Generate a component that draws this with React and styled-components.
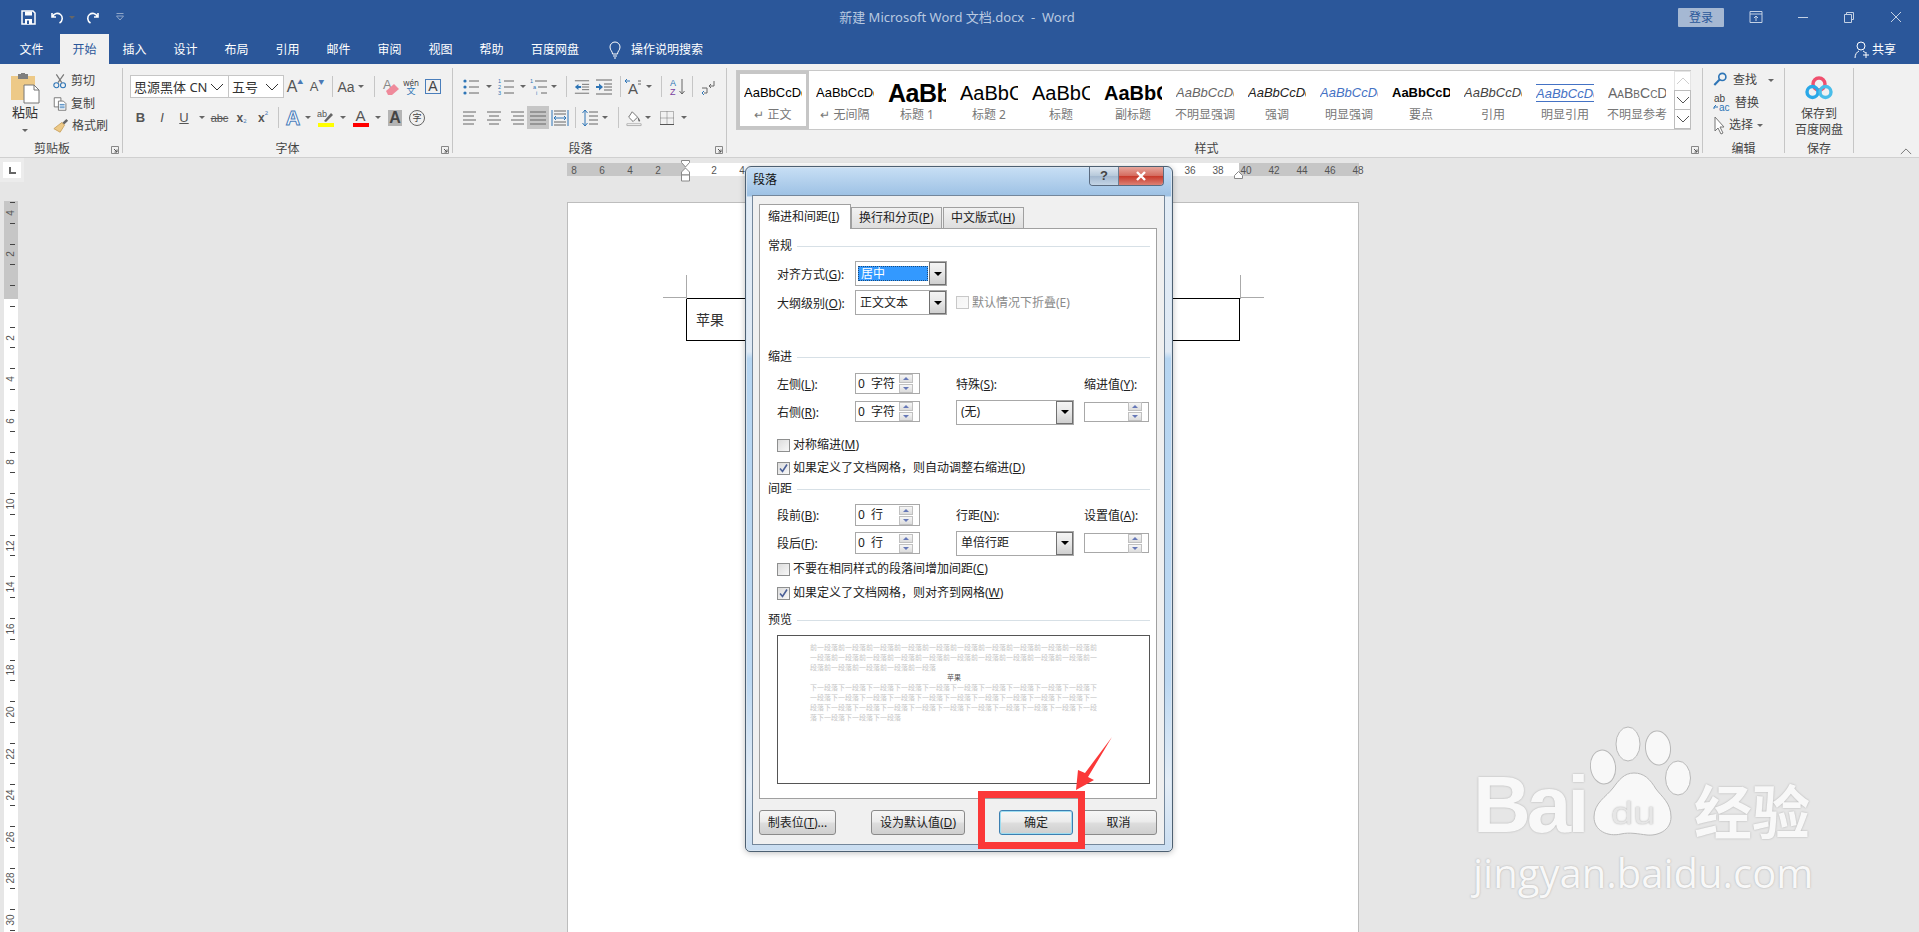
import React from 'react';
import styled, { createGlobalStyle } from 'styled-components';

const SANS = `"Noto Sans","Noto Sans CJK SC",sans-serif`;
const ARIAL = `"Liberation Sans","Noto Sans CJK SC",sans-serif`;

const Global = createGlobalStyle`
  html,body{margin:0;padding:0;background:#e6e6e6;}
  body{font-family:${SANS};font-size:12px;line-height:14px;color:#444;}
  *{box-sizing:border-box;}
`;

const Root = styled.div`position:relative;width:1919px;height:932px;overflow:hidden;display:flex;flex-direction:column;`;

/* ---- title bar ---- */
const TitleBar = styled.div`height:34px;background:#2b579a;display:grid;grid-template-columns:400px 1fr 400px;align-items:center;`;
const Qat = styled.div`display:flex;align-items:center;padding-left:20px;`;
const QatBtn = styled.span`display:flex;width:${p=>p.$w}px;height:20px;margin-left:${p=>p.$ml||0}px;align-items:center;justify-content:center;color:#fff;`;
const TitleText = styled.div`color:#b9c9e0;font-size:13px;line-height:16px;text-align:center;white-space:pre;padding-right:5px;`;
const WinCtl = styled.div`display:flex;align-items:center;justify-content:flex-end;`;
const Login = styled.span`width:46px;height:19px;background:#a5b8d3;color:#2b579a;border-radius:1px;font-size:12px;line-height:19px;text-align:center;margin-right:9px;`;
const WinBtn = styled.span`width:46.5px;display:flex;justify-content:center;color:#c4d1e4;`;

/* ---- tabs ---- */
const TabBar = styled.div`height:30px;background:#2b579a;display:flex;align-items:stretch;padding-left:3px;`;
const RTab = styled.div`width:${p=>p.$w||51}px;display:flex;align-items:center;justify-content:center;font-size:12px;color:${p=>p.$on?'#2b579a':'#fff'};background:${p=>p.$on?'#f1f1f1':'transparent'};padding-top:1px;`;
const TellMe = styled.div`display:flex;align-items:center;gap:9px;color:#fff;font-size:12px;margin-left:15px;padding-top:1px;`;
const Share = styled.div`margin-left:auto;display:flex;align-items:center;gap:2px;color:#fff;font-size:12px;padding-right:23px;padding-top:1px;`;

/* ---- ribbon ---- */
const Ribbon = styled.div`height:94px;background:#f1f1f1;border-bottom:1px solid #d0d0d0;display:flex;align-items:flex-start;`;
const Group = styled.div`position:relative;width:${p=>p.$w}px;height:85px;margin-top:4px;border-right:1px solid #c6c6c6;flex:none;padding-top:${p=>p.$pt??7}px;padding-left:${p=>p.$pl||0}px;display:flex;flex-direction:column;`;
const GroupLabel = styled.div`position:absolute;left:0;right:${p=>p.$shift||0}px;bottom:-3px;text-align:center;font-size:12px;line-height:14px;color:#444;`;
const Launcher = styled.svg.attrs({viewBox:'0 0 8 8'})`position:absolute;right:3px;bottom:-1px;width:8px;height:8px;`;
const Collapse = styled.div`flex:1;align-self:flex-end;display:flex;justify-content:flex-end;padding:0 7px 2px 0;`;

const Row = styled.div`display:flex;align-items:center;height:23px;margin-bottom:8px;`;
const Slot = styled.span`width:${p=>p.$w}px;height:23px;flex:none;display:flex;align-items:center;justify-content:center;position:relative;background:${p=>p.$on?'#c6c6c6':'transparent'};color:#444;`;
const Sep = styled.i`display:block;width:1px;height:21px;background:#c6c6c6;`;
const Caret = styled.i`display:block;width:0;height:0;border-left:3px solid transparent;border-right:3px solid transparent;border-top:3px solid #666;`;
const Combo = styled.span`width:${p=>p.$w}px;height:23px;background:#fff;border:1px solid #c6c6c6;margin-left:${p=>p.$ml||0}px;display:flex;align-items:center;justify-content:space-between;padding:0 4px 0 3px;font-size:13px;color:#333;white-space:nowrap;flex:none;`;
const Letter = styled.span`font-family:${ARIAL};font-size:${p=>p.$s||14}px;font-weight:${p=>p.$b?700:400};font-style:${p=>p.$i?'italic':'normal'};text-decoration:${p=>p.$u?'underline':p.$st?'line-through':'none'};color:${p=>p.$c||'#555'};line-height:16px;`;
const Sup = styled.sub`font-size:6px;line-height:7px;vertical-align:${p=>p.$up?'6px':'-3px'};color:#4b7ab5;align-self:${p=>p.$up?'flex-start':'flex-end'};margin-top:${p=>p.$up?'4px':'0'};margin-bottom:${p=>p.$up?'0':'4px'};`;
const OutlineA = styled.span`font-family:${ARIAL};font-size:20px;font-weight:700;color:#fff;-webkit-text-stroke:1px #4a7ebb;line-height:20px;`;
const ColorA = styled.span`display:flex;flex-direction:column;align-items:center;font-family:${ARIAL};font-size:15px;line-height:14px;color:#555;width:${p=>p.$w||16}px;&::after{content:"";display:block;width:100%;height:4px;background:${p=>p.$bar};margin-top:0;}`;
const ShadedA = styled.span`background:#b4b4b4;width:14px;height:16px;font-family:${ARIAL};font-size:16px;font-weight:700;line-height:16px;text-align:center;color:#444;`;
const CircleZi = styled.span`width:16px;height:16px;border:1px solid #666;border-radius:50%;font-size:9px;line-height:14px;text-align:center;color:#444;`;
const BoxA = styled.span`width:16px;height:15px;border:1px solid #4a7ebb;font-family:${ARIAL};font-size:14px;line-height:13px;text-align:center;color:#444;`;
const Wen = styled.span`display:flex;flex-direction:column;align-items:center;font-size:8px;line-height:8px;color:#444;& b{font-weight:400;font-size:9px;color:#2e75b6;}`;

/* clipboard */
const ClipWrap = styled.div`display:flex;height:100%;margin-top:-3px;`;
const PasteCol = styled.div`width:53px;display:flex;flex-direction:column;align-items:center;padding:1px 3px 0 0;font-size:12px;line-height:14px;color:#333;`;
const PasteLabel = styled.span`margin:1px 0 10px;font-size:13px;`;
const ClipList = styled.div`display:flex;flex-direction:column;margin-top:-2px;`;
const ClipItem = styled.div`display:flex;align-items:center;height:22.5px;gap:3px;font-size:12px;color:#444;white-space:nowrap;`;

/* gallery */
const Gallery = styled.div`width:955px;height:60px;background:#fff;border:1px solid #c8c8c8;display:flex;margin-left:9px;`;
const StyleItem = styled.div`width:72px;height:58px;flex:none;display:flex;flex-direction:column;align-items:center;border:3px solid ${p=>p.$on?'#c6c6c6':'transparent'};padding-top:9px;`;
const Sample = styled.div`width:58px;height:20px;overflow:hidden;white-space:nowrap;font-family:${ARIAL};line-height:20px;font-size:${p=>p.$s||13}px;font-weight:${p=>p.$b?700:400};font-style:${p=>p.$i?'italic':'normal'};color:${p=>p.$c||'#000'};font-variant:${p=>p.$sc?'small-caps':'normal'};letter-spacing:${p=>p.$s>20?'-0.5px':'0'};${p=>p.$ln?'border-top:1px solid #4472c4;border-bottom:1px solid #4472c4;line-height:18px;height:18px;margin:1px 0;':''}`;
const StyleName = styled.div`margin-top:4px;font-size:12px;line-height:15px;color:#777;white-space:nowrap;`;
const Scroller = styled.div`width:17px;display:flex;flex-direction:column;flex:none;margin-left:1px;`;
const ScrollBtn = styled.div`height:20px;border:1px solid ${p=>p.$off?'#e4e4e4':'#bdbdbd'};margin-bottom:-1px;display:flex;align-items:center;justify-content:center;color:${p=>p.$off?'#cfcfcf':'#555'};background:#fff;`;

/* editing */
const EditItem = styled.div`display:flex;align-items:center;height:22.5px;font-size:12px;color:#444;padding-left:10px;gap:4px;`;
const SaveBox = styled.div`display:flex;flex-direction:column;align-items:center;font-size:12px;line-height:15.5px;color:#444;margin-top:2px;& svg{margin-bottom:6px;}`;

/* ---- workspace ---- */
const Workspace = styled.div`flex:1;display:flex;background:#e6e6e6;overflow:hidden;`;
const Rail = styled.div`width:24px;flex:none;display:flex;flex-direction:column;`;
const Corner = styled.div`width:24px;height:24px;background:#ececec;display:flex;align-items:center;justify-content:center;`;
const CornerBtn = styled.div`width:18px;height:16px;background:#fff;position:relative;margin-left:-1px;&::after{content:"";position:absolute;left:6px;top:5px;width:5px;height:5px;border-left:2px solid #666;border-bottom:2px solid #666;}`;
const VRuler = styled.div`width:14px;margin:19px 0 0 4px;flex:1;overflow:hidden;background:linear-gradient(#c6c6c6 0 98px,#fff 98px);`;
const VList = styled.div`margin-top:-9px;display:flex;flex-direction:column;`;
const VCell = styled.div`height:41.6px;padding:10px 0;display:flex;flex-direction:column;align-items:center;justify-content:space-between;position:relative;&::before,&::after{content:"";width:5px;height:1px;background:#444;margin-left:2px;}`;
const VNum = styled.span`position:absolute;top:50%;left:50%;transform:translate(-50%,-50%) rotate(-90deg);font-size:10px;line-height:10px;color:#555;font-family:${ARIAL};`;
const Main = styled.div`margin-left:543px;width:792px;display:flex;flex-direction:column;`;
const HRuler = styled.div`height:13px;margin-top:5px;width:792px;flex:none;position:relative;background:linear-gradient(90deg,#c6c6c6 0 119px,#fff 119px 672px,#c6c6c6 672px);`;
const HList = styled.div`display:flex;margin-left:-7px;`;
const HCell = styled.span`width:28px;flex:none;text-align:center;font-size:10px;line-height:15px;height:13px;color:#555;font-family:${ARIAL};`;
const Marker = styled.svg`position:absolute;left:${p=>p.$x}px;top:${p=>p.$y}px;width:${p=>p.$w}px;height:${p=>p.$h}px;`;
const Page = styled.div`margin-top:26px;flex:1;background:#fff;border:1px solid #bdbdbd;border-bottom:0;padding:95px 0 0 118px;`;
const CellBox = styled.div`position:relative;width:554px;height:43px;border:1px solid #000;display:flex;align-items:center;padding-left:9px;font-size:14px;color:#333;`;
const Crop = styled.i`position:absolute;display:block;background:#aaa;${p=>p.$css}`;

/* ---- dialog ---- */
const Dialog = styled.div`position:absolute;left:745px;top:166px;width:428px;height:686px;border:1px solid #4d6072;border-radius:6px 6px 5px 5px;padding:28px 7px 6px 6px;background:linear-gradient(180deg,#c8dff5 0,#9dc1e4 4.2%,#e2ecf6 4.4%,#dfe9f4 27%,#b6d5f1 28%,#bcd8f2 75%,#e4edf6 90%,#c9ddf1 100%);box-shadow:0 0 0 1px #d8e4f0 inset,0 1px 6px rgba(0,0,0,.25);`;
const DlgTitle = styled.div`position:absolute;left:7px;top:6px;font-size:12px;line-height:14px;color:#111;`;
const DlgCtl = styled.div`position:absolute;right:8px;top:0;display:flex;height:19px;border:1px solid #5a6b80;border-top:0;border-radius:0 0 4px 4px;overflow:hidden;`;
const CtlHelp = styled.div`width:29px;background:linear-gradient(#dfe8f1,#b6c8da 50%,#a3b8cf 51%,#c4d5e6);display:flex;align-items:center;justify-content:center;font-size:13px;font-weight:700;color:#444;font-family:${ARIAL};border-right:1px solid #6d7d90;`;
const CtlClose = styled.div`width:44px;background:linear-gradient(#e7a69c,#d46a5d 50%,#c73a2b 52%,#dd8175);display:flex;align-items:center;justify-content:center;`;
const Inner = styled.div`width:413px;height:650px;border:1px solid #74879b;background:#f0f0f0;padding:8px 0 0 6px;`;
const DTabs = styled.div`display:flex;align-items:flex-end;height:25px;position:relative;z-index:1;margin-bottom:-1px;`;
const DTab = styled.div`width:${p=>p.$w}px;height:${p=>p.$on?25:22}px;padding-left:${p=>p.$on?8:7}px;font-size:12px;line-height:${p=>p.$on?24:20}px;color:#222;white-space:nowrap;border:1px solid #a0a0a0;border-bottom:${p=>p.$on?'0':'1px solid #a0a0a0'};background:${p=>p.$on?'#fff':'linear-gradient(#f2f2f2,#dedede)'};margin-right:${p=>p.$mr||0}px;`;
const Panel = styled.div`width:398px;height:571px;background:#fff;border:1px solid #a0a0a0;padding:10px 6px 0 8px;`;
const SecHead = styled.div`display:flex;align-items:center;gap:5px;height:14px;margin-top:${p=>p.$mt||0}px;font-size:12px;color:#222;&::after{content:"";flex:1;height:1px;background:#d7e0e6;}`;
const Indent = styled.div`margin-left:9px;`;
const FormRow = styled.div`display:flex;align-items:center;height:25px;margin-top:${p=>p.$mt||0}px;`;
const Label = styled.span`font-size:12px;line-height:14px;padding-top:2px;color:#222;white-space:nowrap;width:${p=>p.$w?p.$w+'px':'auto'};flex:none;`;
const Select = styled.div`width:${p=>p.$w}px;height:25px;border:1px solid #a8a8a8;background:#fff;display:flex;align-items:stretch;padding:1px;flex:none;margin-top:${p=>p.$mt||0}px;`;
const SelectVal = styled.div`flex:1;display:flex;align-items:center;padding:0 3px;margin-right:2px;font-size:12px;color:${p=>p.$sel?'#fff':'#222'};background:${p=>p.$sel?'#3399ff':'transparent'};outline:${p=>p.$sel?'1px dotted #1b4a7a':'none'};outline-offset:-1px;margin-top:${p=>p.$sel?'3px':'0'};margin-bottom:${p=>p.$sel?'3px':'0'};margin-left:${p=>p.$sel?'1px':'0'};`;
const SelectBtn = styled.div`width:17px;border:1px solid #707070;background:linear-gradient(#f4f4f4,#e6e6e6 50%,#cfcfcf);display:flex;align-items:center;justify-content:center;margin:-1px;&::after{content:"";border-left:4px solid transparent;border-right:4px solid transparent;border-top:4px solid #000;}`;
const CheckWrap = styled.div`display:flex;align-items:center;gap:3px;height:14px;margin-top:${p=>p.$mt||0}px;margin-left:${p=>p.$ml||0}px;font-size:12px;line-height:14px;color:${p=>p.$off?'#8a8a8a':'#222'};white-space:nowrap;`;
const CheckBox = styled.span`width:13px;height:13px;border:1px solid ${p=>p.$off?'#c8c8c8':'#8e8f8f'};background:linear-gradient(135deg,${p=>p.$off?'#f4f4f4,#fafafa':'#dcdcdc,#f8f8f8'});flex:none;display:flex;`;
const FieldGrid = styled.div`display:grid;grid-template-columns:78px 101px 128px 65px;grid-template-rows:${p=>p.$h}px ${p=>p.$h}px;row-gap:${p=>p.$gap}px;align-items:center;margin-top:${p=>p.$mt}px;`;
const Spin = styled.div`width:${p=>p.$w||65}px;height:${p=>p.$h||21}px;border:1px solid #a8a8a8;display:flex;justify-content:space-between;align-items:center;padding:0 6px 0 2px;font-size:12px;color:#222;background:#fff;white-space:pre;`;
const SpinBtns = styled.div`width:14px;display:flex;flex-direction:column;gap:1px;`;
const SpinBtn = styled.div`height:9px;border:1px solid #c0c0c0;background:linear-gradient(#f6f6f6,#dcdcdc);display:flex;align-items:center;justify-content:center;&::after{content:"";border-left:3px solid transparent;border-right:3px solid transparent;${p=>p.$down?'border-top':'border-bottom'}:3px solid #6678b8;}`;
const Preview = styled.div`margin-top:8px;height:149px;border:1px solid #555;padding:7px 0 0 32px;font-size:7px;line-height:10px;`;
const PvText = styled.div`width:288px;word-break:break-all;color:${p=>p.$dark?'#555':'#c6c6c6'};text-align:${p=>p.$dark?'center':'left'};`;
const BtnRow = styled.div`display:flex;margin-top:11px;`;
const DBtn = styled.div`width:${p=>p.$w}px;height:25px;margin-right:${p=>p.$mr||0}px;border:1px solid ${p=>p.$def?'#3c7fb1':'#8a8a8a'};border-radius:3px;background:linear-gradient(#f6f6f6,#ececec 45%,#dcdcdc 55%,#cfcfcf);box-shadow:${p=>p.$def?'inset 0 0 0 1px #9ddcf0':'none'};display:flex;align-items:center;justify-content:center;font-size:12px;color:#222;`;

/* annotation */
const RedBox = styled.div`position:absolute;left:978px;top:791px;width:107px;height:58px;border:7px solid #fb3838;`;
const RedArrow = styled.svg`position:absolute;left:1070px;top:732px;width:50px;height:60px;`;

/* watermark */
const Mark = styled.div`position:absolute;left:1473px;top:726px;width:360px;color:#f8f8f8;text-shadow:0 0 2px #a8a8a8;`;
const MarkTop = styled.div`display:flex;align-items:flex-end;height:112px;`;
const MarkBai = styled.span`font-family:${ARIAL};font-weight:700;font-size:80px;line-height:80px;letter-spacing:-4px;margin-bottom:-7px;width:117px;`;
const PawWrap = styled.div`position:relative;width:104px;height:112px;flex:none;`;
const PawDu = styled.span`position:absolute;left:21px;bottom:9px;font-family:${ARIAL};font-size:40px;line-height:40px;letter-spacing:0;color:#e6e6e6;transform:scaleY(.8);transform-origin:bottom;`;
const MarkZh = styled.span`font-family:"Noto Sans CJK SC",sans-serif;font-weight:700;font-size:58px;line-height:58px;margin-bottom:0;white-space:nowrap;`;
const MarkUrl = styled.div`font-family:"Open Sans",sans-serif;font-size:40px;line-height:46px;margin-top:12px;white-space:nowrap;`;

const Ic = ({ s = 18, w, h, vb, children }) => (
  <svg width={w || s} height={h || s} viewBox={vb || '0 0 18 18'} fill="none">{children}</svg>
);
const G = '#666', B = '#2e75b6';
const lines = (ys, x1, x2, c = G) => ys.map((y, i) => <path key={i} d={`M${Array.isArray(x1) ? x1[i] : x1} ${y}H${Array.isArray(x2) ? x2[i] : x2}`} stroke={c} />);

const Launch = () => (
  <Launcher><path d="M.5.5h7v7h-7z" stroke="#888" fill="none"/><path d="M3 3l3 3M6 3.5V6H3.5" stroke="#555" fill="none"/></Launcher>
);
const Chev = ({ up, w = 14, h = 8, c = 'currentColor' }) => (
  <Ic w={w} h={h} vb="0 0 14 8"><path d={up ? 'M1 7l6-6 6 6' : 'M1 1l6 6 6-6'} stroke={c} /></Ic>
);

const IconPaste = () => (
  <Ic w={29} h={31} vb="0 0 29 31">
    <path d="M0 3h24v24H0z" fill="#edc987"/>
    <path d="M7 1h10v5H7z" fill="#7f7f7f"/><path d="M10 0h4v2h-4z" fill="#7f7f7f"/>
    <path d="M13 12h10l5 5v13H13z" fill="#fff" stroke="#777"/><path d="M23 12v5h5" stroke="#777"/>
  </Ic>
);
const IconCut = () => (
  <Ic w={15} h={18}>
    <circle cx="4" cy="14" r="3" stroke={B} strokeWidth="1.3"/><circle cx="12" cy="14" r="3" stroke={B} strokeWidth="1.3"/>
    <path d="M6 11L13 1M10.5 11L4 1" stroke="#777" strokeWidth="1.4"/>
  </Ic>
);
const IconCopy = () => (
  <Ic w={15} h={16}>
    <path d="M1.5 1.5h8v11h-8z" fill="#fff" stroke="#666"/><path d="M6.5 5.5h6l3 3v8h-9z" fill="#fff" stroke="#666"/>
    <path d="M8 9.5h6M8 11.5h6M8 13.5h6" stroke="#2e75b6"/>
  </Ic>
);
const IconBrush = () => (
  <Ic w={16} h={16}>
    <path d="M10 6l5-5 2 2-5 5z" fill="#666"/><path d="M10 5l3 3-5 8-7-4z" fill="#edc987" stroke="#c9a15e"/>
  </Ic>
);
const IconLines = ({ ys = [3, 7, 11, 15], x1 = 1, x2 = 17 }) => <Ic>{lines(ys, x1, x2)}</Ic>;
const IconBullets = () => (
  <Ic>{[3, 9, 15].map(y => <circle key={y} cx="3" cy={y} r="1.6" fill={B} />)}{lines([3, 9, 15], 7, 17)}</Ic>
);
const Small = ({ x, y, c = B, children, s = 5.5 }) => <text x={x} y={y} fontSize={s} fill={c} fontFamily="Liberation Sans">{children}</text>;
const IconNumbers = () => (
  <Ic><Small x="1" y="5">1</Small><Small x="1" y="11">2</Small><Small x="1" y="17">3</Small>{lines([3, 9, 15], 7, 17)}</Ic>
);
const IconMulti = () => (
  <Ic><Small x="0" y="5">1</Small><Small x="3" y="11">a</Small><Small x="6" y="17">i</Small>{lines([3, 9, 15], [5, 8, 11], 17)}</Ic>
);
const IconIndent = ({ out }) => (
  <Ic>
    {lines([2, 16], 1, 17)}{lines([6, 9, 12], 9, 17)}
    <path d={out ? 'M1 9l4-3.5V8h3v2H5v2.5z' : 'M8 9L4 5.5V8H1v2h3v2.5z'} fill={B} />
  </Ic>
);
const IconAsian = () => (
  <Ic><text x="4" y="16" fontSize="15" fill="#555" fontFamily="Liberation Sans">A</text><path d="M1 3h5M1 3l2-2M1 3l2 2" stroke={B}/><path d="M14 3h3M14 6h3" stroke={G}/></Ic>
);
const IconSort = () => (
  <Ic>
    <Small x="1" y="8" s="9" c={B}>A</Small><Small x="1" y="17" s="9" c="#7b3fa0">Z</Small>
    <path d="M13 1v15M10.5 13l2.5 3 2.5-3" stroke={G}/>
  </Ic>
);
const IconMarks = () => (
  <Ic>
    <path d="M15 3v5H10M12 6l-2 2 2 2" stroke={G}/><path d="M3 10h5M5 15h3v-5" stroke={G}/>
    <path d="M5 13l-2 2 2 2" stroke={B}/>
  </Ic>
);
const IconDist = () => (
  <Ic>
    <path d="M1 1v16M17 1v16" stroke="#2e75b6"/>{lines([2, 5, 13, 16], 3, 15)}
    <path d="M3 9h12M5 7L3 9l2 2M13 7l2 2-2 2" stroke={B}/>
  </Ic>
);
const IconSpacing = () => (
  <Ic>
    <path d="M4 1v16M1.5 4L4 1l2.5 3M1.5 14L4 17l2.5-3" stroke={B}/>{lines([3, 7, 11, 15], 8, 17)}
  </Ic>
);
const IconBucket = () => (
  <Ic>
    <path d="M7 2l6 6-5 5-5-5z" fill="#fff" stroke="#666"/><path d="M13 8c2 2 3 4 3 4.5s-1.5 1-2 0z" fill="#666"/>
    <path d="M1 15.5h16v2H1z" fill="#fff" stroke="#aaa"/>
  </Ic>
);
const IconGrid = () => (
  <Ic>
    <path d="M2.5 2.5h13v13h-13zM2.5 9h13M9 2.5v13" stroke="#777" strokeDasharray="1 1"/><path d="M2 15.5h14" stroke="#555"/>
  </Ic>
);
const IconEraser = () => (
  <Ic>
    <text x="1" y="11" fontSize="13" fill="#888" fontFamily="Liberation Sans">A</text>
    <path d="M4 13l8-7 5 5-7 6H6z" fill="#ef8a9b"/>
  </Ic>
);
const IconFind = () => (
  <Ic w={16} h={16}><circle cx="10.5" cy="5.5" r="4" stroke={B} strokeWidth="1.8"/><path d="M7.5 8.5L1.5 14.5" stroke={B} strokeWidth="2.4"/></Ic>
);
const IconReplace = () => (
  <Ic w={18} h={18}>
    <Small x="1" y="7.5" s="10" c="#444">ab</Small><Small x="6" y="17" s="10" c={B}>ac</Small>
    <path d="M1 13h4M1 13l2-2M1 13v2" stroke={B}/>
  </Ic>
);
const IconCursor = () => (
  <Ic w={12} h={19} vb="0 0 12 19"><path d="M2 1v14l3-3 3 6 2-1-3-6h4z" fill="#fff" stroke="#777"/></Ic>
);
const IconBaidu = () => (
  <Ic w={28} h={24} vb="0 0 28 24">
    <circle cx="14" cy="8" r="6" stroke="#f0506e" strokeWidth="3.4"/>
    <circle cx="7.5" cy="16" r="5.5" stroke="#2aa8e8" strokeWidth="3.4"/>
    <circle cx="20.5" cy="16" r="5.5" stroke="#49bde9" strokeWidth="3.4"/>
  </Ic>
);
const IconPaw = () => (
  <svg width="104" height="112" viewBox="0 0 104 112">
    <g fill="#f8f8f8" stroke="#b8b8b8" strokeWidth="1" style={{ filter: 'blur(.4px)' }}>
      <ellipse cx="13" cy="41" rx="12.5" ry="17" transform="rotate(-8 13 41)"/>
      <ellipse cx="38" cy="18" rx="12" ry="17"/>
      <ellipse cx="68" cy="22" rx="12.5" ry="17" transform="rotate(-6 68 22)"/>
      <ellipse cx="88" cy="52" rx="12.5" ry="17"/>
      <path d="M44 47c10 0 16 6 22 16 6 8 15 14 15 28 0 14-14 19-24 18-9-1-17-3-26-1-13 3-27-3-27-17 0-14 12-20 19-29 6-8 11-15 21-15z"/>
    </g>
  </svg>
);

const U = styled.u``;

const styleItems = [
  { n: '↵ 正文', on: 1 }, { n: '↵ 无间隔' },
  { n: '标题 1', s: 25, b: 1, t: 'AaBb' }, { n: '标题 2', s: 20, t: 'AaBbC' },
  { n: '标题', s: 20, t: 'AaBbC' }, { n: '副标题', s: 20, b: 1, t: 'AaBbC' },
  { n: '不明显强调', i: 1, c: '#666', s: 13 }, { n: '强调', i: 1, c: '#222', s: 13 },
  { n: '明显强调', i: 1, c: '#4472c4', s: 13 }, { n: '要点', b: 1, s: 13 },
  { n: '引用', i: 1, c: '#444', s: 13 }, { n: '明显引用', i: 1, c: '#4472c4', ln: 1, s: 13 },
  { n: '不明显参考', c: '#666', sc: 1, s: 14 },
];

const topTabs = ['文件', '开始', '插入', '设计', '布局', '引用', '邮件', '审阅', '视图', '帮助'];
const hNums = ['8', '6', '4', '2', '', ...Array.from({ length: 24 }, (_, i) => String((i + 1) * 2))];
const vNums = ['4', '2', '', ...Array.from({ length: 15 }, (_, i) => String((i + 1) * 2))];

const SpinField = ({ v, w, h }) => (
  <Spin $w={w} $h={h}><span>{v}</span><SpinBtns><SpinBtn/><SpinBtn $down/></SpinBtns></Spin>
);
const Check = ({ on, off, mt, ml, children }) => (
  <CheckWrap $mt={mt} $ml={ml} $off={off}>
    <CheckBox $off={off}>
      {on && <svg width="11" height="11" viewBox="0 0 11 11" fill="none"><path d="M2 5.5l2.5 3L9 1.5" stroke="#4a5f97" strokeWidth="1.6"/></svg>}
    </CheckBox>
    <span>{children}</span>
  </CheckWrap>
);

export default function App() {
  return (
    <Root>
      <Global />
      <TitleBar>
        <Qat>
          <QatBtn $w={16}>
            <Ic s={15} vb="0 0 15 15"><path d="M1 1h11l2 2v11H1z" stroke="#fff" strokeWidth="1.5"/><path d="M4 1.5h7v4H4zM4 14V9h7v5" fill="#fff"/><path d="M6 10.5h2v3.5H6z" fill="#2b579a"/></Ic>
          </QatBtn>
          <QatBtn $w={24} $ml={9}>
            <Ic w={15} h={15} vb="0 0 15 15"><path d="M2 3v4h4M2.5 7C4 3 8 2.5 10.5 4.5s2.5 6.5-1 8.5" stroke="#fff" strokeWidth="1.6"/></Ic>
          </QatBtn>
          <QatBtn $w={6}><Caret /></QatBtn>
          <QatBtn $w={24} $ml={5}>
            <Ic w={15} h={15} vb="0 0 15 15"><path d="M13 3v4H9M12.5 7C11 3 7 2.5 4.5 4.5s-2.5 6.5 1 8.5" stroke="#fff" strokeWidth="1.6"/></Ic>
          </QatBtn>
          <QatBtn $w={16} $ml={8}>
            <Ic w={10} h={10} vb="0 0 10 10"><path d="M1.5 1.5h7M1.5 4l3.5 4 3.5-4z" stroke="#8fa6c8"/></Ic>
          </QatBtn>
        </Qat>
        <TitleText>新建 Microsoft Word 文档.docx  -  Word</TitleText>
        <WinCtl>
          <Login>登录</Login>
          <WinBtn><Ic s={14} vb="0 0 14 14"><path d="M1 1.5h12v11H1zM1 4h12M7 11V6M5 8l2-2 2 2" stroke="currentColor"/></Ic></WinBtn>
          <WinBtn><Ic w={12} h={12} vb="0 0 12 12"><path d="M1 6.5h10" stroke="currentColor"/></Ic></WinBtn>
          <WinBtn><Ic w={12} h={12} vb="0 0 12 12"><path d="M1.5 3.5h7v8h-7zM3.5 3.5v-2h7v7h-2" stroke="currentColor"/></Ic></WinBtn>
          <WinBtn><Ic w={12} h={12} vb="0 0 12 12"><path d="M1 1l10 10M11 1L1 11" stroke="currentColor"/></Ic></WinBtn>
        </WinCtl>
      </TitleBar>

      <TabBar>
        {topTabs.map(t => <RTab key={t} $on={t === '开始'} $w={t === '文件' ? 57 : t === '开始' ? 49 : 51}>{t}</RTab>)}
        <RTab $w={76}>百度网盘</RTab>
        <TellMe>
          <Ic w={14} h={18} vb="0 0 14 18"><path d="M4.5 13c0-3-2.5-3.5-2.5-7a5 5 0 0 1 10 0c0 3.5-2.5 4-2.5 7zM5 15h4M6 17h2" stroke="#fff"/></Ic>
          <span>操作说明搜索</span>
        </TellMe>
        <Share>
          <Ic w={16} h={18} vb="0 0 16 18"><circle cx="7" cy="5" r="4" stroke="#fff"/><path d="M1 17c0-4 2-6 4-7M9 10c1 .4 2 1 2.5 2M9 14h6M12 11v6" stroke="#fff"/></Ic>
          <span>共享</span>
        </Share>
      </TabBar>

      <Ribbon>
        <Group $w={123}>
          <ClipWrap>
            <PasteCol>
              <IconPaste />
              <PasteLabel>粘贴</PasteLabel>
              <Caret />
            </PasteCol>
            <ClipList>
              <ClipItem><IconCut /><span>剪切</span></ClipItem>
              <ClipItem><IconCopy /><span>复制</span></ClipItem>
              <ClipItem><IconBrush /><span>格式刷</span></ClipItem>
            </ClipList>
          </ClipWrap>
          <GroupLabel $shift={18}>剪贴板</GroupLabel><Launch />
        </Group>

        <Group $w={330} $pl={7}>
          <Row>
            <Combo $w={99}><span>思源黑体 CN</span><Chev /></Combo>
            <Combo $w={56} $ml={-1}><span>五号</span><Chev /></Combo>
            <Slot $w={22}><Letter $s={16}>A</Letter><Sup $up>▲</Sup></Slot>
            <Slot $w={22}><Letter $s={13}>A</Letter><Sup $up>▼</Sup></Slot>
            <Slot $w={8}><Sep /></Slot>
            <Slot $w={20}><Letter $s={14}>Aa</Letter></Slot>
            <Slot $w={10}><Caret /></Slot>
            <Slot $w={16}><Sep /></Slot>
            <Slot $w={18}><IconEraser /></Slot>
            <Slot $w={22}><Wen>wén<b>文</b></Wen></Slot>
            <Slot $w={22}><BoxA>A</BoxA></Slot>
          </Row>
          <Row>
            <Slot $w={21}><Letter $b $s={13}>B</Letter></Slot>
            <Slot $w={22}><Letter $i $s={13}>I</Letter></Slot>
            <Slot $w={22}><Letter $u $s={13}>U</Letter></Slot>
            <Slot $w={14}><Caret /></Slot>
            <Slot $w={21}><Letter $st $s={11}>abc</Letter></Slot>
            <Slot $w={23}><Letter $b $s={12}>x</Letter><Sup>2</Sup></Slot>
            <Slot $w={20}><Letter $b $s={12}>x</Letter><Sup $up>2</Sup></Slot>
            <Slot $w={10}><Sep /></Slot>
            <Slot $w={20}><OutlineA>A</OutlineA></Slot>
            <Slot $w={10}><Caret /></Slot>
            <Slot $w={25}>
              <Ic><text x="0" y="8" fontSize="9" fill="#555" fontFamily="Liberation Sans">ab</text><path d="M7 12l7-8 2 2-7 7z" fill="#666"/><path d="M1 14h16v4H1z" fill="#ffff00"/></Ic>
            </Slot>
            <Slot $w={10}><Caret /></Slot>
            <Slot $w={25}><ColorA $bar="#ff0000">A</ColorA></Slot>
            <Slot $w={10}><Caret /></Slot>
            <Slot $w={24}><ShadedA>A</ShadedA></Slot>
            <Slot $w={20}><CircleZi>字</CircleZi></Slot>
          </Row>
          <GroupLabel>字体</GroupLabel><Launch />
        </Group>

        <Group $w={274} $pl={5}>
          <Row>
            <Slot $w={26}><IconBullets /></Slot>
            <Slot $w={9}><Caret /></Slot>
            <Slot $w={25}><IconNumbers /></Slot>
            <Slot $w={9}><Caret /></Slot>
            <Slot $w={23}><IconMulti /></Slot>
            <Slot $w={8}><Caret /></Slot>
            <Slot $w={16}><Sep /></Slot>
            <Slot $w={16}><IconIndent out /></Slot>
            <Slot $w={28}><IconIndent /></Slot>
            <Slot $w={4}><Sep /></Slot>
            <Slot $w={22}><IconAsian /></Slot>
            <Slot $w={10}><Caret /></Slot>
            <Slot $w={14}><Sep /></Slot>
            <Slot $w={20}><IconSort /></Slot>
            <Slot $w={8}><Sep /></Slot>
            <Slot $w={24}><IconMarks /></Slot>
          </Row>
          <Row>
            <Slot $w={25}><IconLines x2={[14, 12, 14, 12]} /></Slot>
            <Slot $w={22}><IconLines x1={[2, 4, 2, 4]} x2={[16, 14, 16, 14]} /></Slot>
            <Slot $w={22}><IconLines x1={[4, 6, 4, 6]} /></Slot>
            <Slot $w={22} $on><IconLines /></Slot>
            <Slot $w={22}><IconDist /></Slot>
            <Slot $w={8}><Sep /></Slot>
            <Slot $w={21}><IconSpacing /></Slot>
            <Slot $w={10}><Caret /></Slot>
            <Slot $w={16}><Sep /></Slot>
            <Slot $w={16}><IconBucket /></Slot>
            <Slot $w={12}><Caret /></Slot>
            <Slot $w={25}><IconGrid /></Slot>
            <Slot $w={9}><Caret /></Slot>
          </Row>
          <GroupLabel $shift={18}>段落</GroupLabel><Launch />
        </Group>

        <Group $w={976} $pt={2}>
          <Gallery>
            {styleItems.map(it => (
              <StyleItem key={it.n} $on={it.on}>
                <Sample $s={it.s} $b={it.b} $i={it.i} $c={it.c} $sc={it.sc} $ln={it.ln}>{it.t || 'AaBbCcDd'}</Sample>
                <StyleName>{it.n}</StyleName>
              </StyleItem>
            ))}
            <Scroller>
              <ScrollBtn $off><Chev up /></ScrollBtn>
              <ScrollBtn><Chev /></ScrollBtn>
              <ScrollBtn><Chev /></ScrollBtn>
            </Scroller>
          </Gallery>
          <GroupLabel $shift={16}>样式</GroupLabel><Launch />
        </Group>

        <Group $w={82} $pt={1}>
          <EditItem><IconFind /><span>查找</span><Slot $w={20}><Caret /></Slot></EditItem>
          <EditItem><IconReplace /><span>替换</span></EditItem>
          <EditItem><IconCursor /><span>选择</span><Caret /></EditItem>
          <GroupLabel>编辑</GroupLabel>
        </Group>

        <Group $w={69} $pt={6}>
          <SaveBox>
            <IconBaidu />
            <span>保存到</span>
            <span>百度网盘</span>
          </SaveBox>
          <GroupLabel>保存</GroupLabel>
        </Group>

        <Collapse><Chev up c="#666" w={12} h={7} /></Collapse>
      </Ribbon>

      <Workspace>
        <Rail>
          <Corner><CornerBtn /></Corner>
          <VRuler>
            <VList>{vNums.map((n, i) => <VCell key={i}><VNum>{n}</VNum></VCell>)}</VList>
          </VRuler>
        </Rail>
        <Main>
          <HRuler>
            <HList>{hNums.map((n, i) => <HCell key={i}>{n}</HCell>)}</HList>
            <Marker $x={114} $y={-3} $w={10} $h={24} viewBox="0 0 10 24">
              <path d="M.5.5h8v2L4.5 7 .5 2.5z" fill="#fff" stroke="#888"/><path d="M4.5 8l4 4v3h-8v-3z" fill="#fff" stroke="#888"/><path d="M.5 15h8v6h-8z" fill="#fff" stroke="#888"/>
            </Marker>
            <Marker $x={667} $y={8} $w={10} $h={9} viewBox="0 0 10 9">
              <path d="M4.5.5l4 4v3h-8v-3z" fill="#fff" stroke="#888"/>
            </Marker>
          </HRuler>
          <Page>
            <CellBox>
              苹果
              <Crop $css="left:-1px;top:-24px;width:1px;height:24px;" />
              <Crop $css="left:-24px;top:-2px;width:23px;height:1px;" />
              <Crop $css="right:-2px;top:-24px;width:1px;height:24px;" />
              <Crop $css="right:-25px;top:-2px;width:24px;height:1px;" />
            </CellBox>
          </Page>
        </Main>
      </Workspace>

      <Dialog>
        <DlgTitle>段落</DlgTitle>
        <DlgCtl>
          <CtlHelp>?</CtlHelp>
          <CtlClose><Ic w={12} h={10} vb="0 0 12 10"><path d="M2 1l8 8M10 1L2 9" stroke="#fff" strokeWidth="2.4"/></Ic></CtlClose>
        </DlgCtl>
        <Inner>
          <DTabs>
            <DTab $w={92} $on>缩进和间距(<U>I</U>)</DTab>
            <DTab $w={91} $mr={1}>换行和分页(<U>P</U>)</DTab>
            <DTab $w={81}>中文版式(<U>H</U>)</DTab>
          </DTabs>
          <Panel>
            <SecHead>常规</SecHead>
            <Indent>
              <FormRow $mt={8}>
                <Label $w={78}>对齐方式(<U>G</U>):</Label>
                <Select $w={92}><SelectVal $sel>居中</SelectVal><SelectBtn /></Select>
              </FormRow>
              <FormRow $mt={4}>
                <Label $w={78}>大纲级别(<U>O</U>):</Label>
                <Select $w={92}><SelectVal>正文文本</SelectVal><SelectBtn /></Select>
                <Check off ml={9}>默认情况下折叠(E)</Check>
              </FormRow>
            </Indent>

            <SecHead $mt={35}>缩进</SecHead>
            <Indent>
              <FieldGrid $h={21} $gap={7} $mt={9}>
                <Label>左侧(<U>L</U>):</Label>
                <SpinField v="0  字符" />
                <Label>特殊(<U>S</U>):</Label>
                <Label>缩进值(<U>Y</U>):</Label>
                <Label>右侧(<U>R</U>):</Label>
                <SpinField v="0  字符" />
                <Select $w={118} $mt={1}><SelectVal>(无)</SelectVal><SelectBtn /></Select>
                <SpinField h={20} />
              </FieldGrid>
              <Check mt={16}>对称缩进(<U>M</U>)</Check>
              <Check on mt={9}>如果定义了文档网格，则自动调整右缩进(<U>D</U>)</Check>
            </Indent>

            <SecHead $mt={7}>间距</SecHead>
            <Indent>
              <FieldGrid $h={22} $gap={6} $mt={8}>
                <Label>段前(<U>B</U>):</Label>
                <SpinField v="0  行" h={22} />
                <Label>行距(<U>N</U>):</Label>
                <Label>设置值(<U>A</U>):</Label>
                <Label>段后(<U>F</U>):</Label>
                <SpinField v="0  行" h={22} />
                <Select $w={118}><SelectVal>单倍行距</SelectVal><SelectBtn /></Select>
                <SpinField h={20} />
              </FieldGrid>
              <Check mt={8}>不要在相同样式的段落间增加间距(<U>C</U>)</Check>
              <Check on mt={10}>如果定义了文档网格，则对齐到网格(<U>W</U>)</Check>
            </Indent>

            <SecHead $mt={13}>预览</SecHead>
            <Indent>
              <Preview>
                <PvText>{'前一段落'.repeat(25)}</PvText>
                <PvText $dark>苹果</PvText>
                <PvText>{'下一段落'.repeat(34)}</PvText>
              </Preview>
            </Indent>
          </Panel>
          <BtnRow>
            <DBtn $w={77} $mr={35}>制表位(<U>T</U>)...</DBtn>
            <DBtn $w={94} $mr={34}>设为默认值(<U>D</U>)</DBtn>
            <DBtn $w={74} $mr={7} $def>确定</DBtn>
            <DBtn $w={77}>取消</DBtn>
          </BtnRow>
        </Inner>
      </Dialog>

      <RedBox />
      <RedArrow viewBox="0 0 50 60">
        <path d="M42 5L15 41l-7-3-2 20 18-10-6-3z" fill="#fb3838"/>
      </RedArrow>

      <Mark>
        <MarkTop>
          <MarkBai>Bai</MarkBai>
          <PawWrap><IconPaw /><PawDu>du</PawDu></PawWrap>
          <MarkZh>经验</MarkZh>
        </MarkTop>
        <MarkUrl>jingyan.baidu.com</MarkUrl>
      </Mark>
    </Root>
  );
}
